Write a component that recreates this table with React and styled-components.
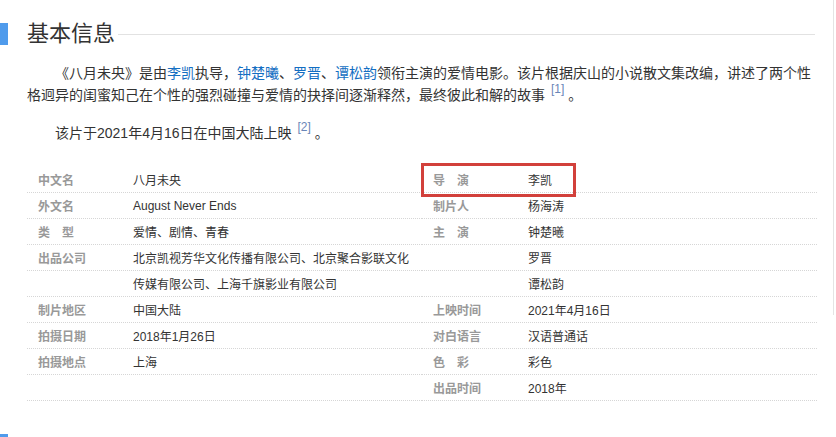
import React from 'react';
import styled, { createGlobalStyle } from 'styled-components';

const GlobalStyle = createGlobalStyle`
  body {
    margin: 0;
    background: #fff;
    font-family: "Liberation Sans", Arial, "Noto Sans CJK SC", sans-serif;
    color: #333;
  }
`;

const Page = styled.div`
  position: relative;
  width: 836px;
  height: 437px;
  overflow: hidden;
  display: flex;
  flex-direction: column;
`;

const Heading = styled.div`
  display: flex;
  align-items: center;
  height: 22px;
  margin-top: 23px;
  margin-right: 21px;
  .bar {
    width: 8px;
    height: 22px;
    background: #4f9bec;
  }
  h2 {
    margin: 0 0 0 19px;
    font-size: 22px;
    line-height: 22px;
    font-weight: 400;
    color: #333;
  }
  .rule {
    flex: 1;
    height: 1px;
    margin-left: 3px;
    background: #e2e2e2;
  }
`;

const Content = styled.div`
  margin-left: 27px;
  width: 790px;
`;

const Para = styled.p`
  margin: ${(p) => p.$top}px 0 0;
  font-size: 14px;
  line-height: 22px;
  text-indent: 28px;
  color: #333;
  a {
    color: #136ec2;
    text-decoration: none;
  }
  sup {
    font-size: 12px;
    line-height: 0;
    color: #6a86b8;
    margin: 0 4px 0 6px;
    position: relative;
    top: -1px;
  }
`;

const Info = styled.div`
  position: relative;
  display: grid;
  grid-template-columns: 395px 395px;
  margin-top: 23px;
`;

const Column = styled.div`
  display: flex;
  flex-direction: column;
`;

const Row = styled.div`
  display: flex;
  align-items: center;
  height: 25px;
  border-bottom: 1px dotted #d6d6d6;
  font-size: 12px;
  .name {
    width: 95px;
    padding-left: 11px;
    font-weight: 700;
    color: #999;
    white-space: pre;
  }
  .value {
    color: #333;
  }
`;

const Highlight = styled.div`
  position: absolute;
  left: 394px;
  top: -4px;
  width: 155px;
  height: 34px;
  box-sizing: border-box;
  border: 3px solid #d2403b;
`;

const NextBar = styled.div`
  width: 8px;
  height: 22px;
  margin-top: 33px;
  background: #4f9bec;
`;

const Edge = styled.div`
  position: absolute;
  right: 2px;
  top: 0;
  width: 1px;
  height: 315px;
  background: #e4e4e4;
`;

const left = [
  ['中文名', '八月未央'],
  ['外文名', 'August Never Ends'],
  ['类　型', '爱情、剧情、青春'],
  ['出品公司', '北京凯视芳华文化传播有限公司、北京聚合影联文化'],
  ['', '传媒有限公司、上海千旗影业有限公司'],
  ['制片地区', '中国大陆'],
  ['拍摄日期', '2018年1月26日'],
  ['拍摄地点', '上海'],
  ['', ''],
];

const right = [
  ['导　演', '李凯'],
  ['制片人', '杨海涛'],
  ['主　演', '钟楚曦'],
  ['', '罗晋'],
  ['', '谭松韵'],
  ['上映时间', '2021年4月16日'],
  ['对白语言', '汉语普通话'],
  ['色　彩', '彩色'],
  ['出品时间', '2018年'],
];

const renderRows = (rows) =>
  rows.map(([name, value], i) => (
    <Row key={i}>
      <span className='name'>{name}</span>
      <span className='value'>{value}</span>
    </Row>
  ));

export default function App() {
  return (
    <Page>
      <GlobalStyle />
      <Heading>
        <div className='bar' />
        <h2>基本信息</h2>
        <div className='rule' />
      </Heading>
      <Content>
        <Para $top={17}>
          《八月未央》是由<a href='#'>李凯</a>执导，<a href='#'>钟楚曦</a>、<a href='#'>罗晋</a>、
          <a href='#'>谭松韵</a>领衔主演的爱情电影。该片根据庆山的小说散文集改编，讲述了两个性格迥异的闺蜜知己在个性的强烈碰撞与爱情的抉择间逐渐释然，最终彼此和解的故事
          <sup>[1]</sup>。
        </Para>
        <Para $top={16}>
          该片于2021年4月16日在中国大陆上映<sup>[2]</sup>。
        </Para>
        <Info>
          <Column>{renderRows(left)}</Column>
          <Column>{renderRows(right)}</Column>
          <Highlight />
        </Info>
      </Content>
      <NextBar />
      <Edge />
    </Page>
  );
}
